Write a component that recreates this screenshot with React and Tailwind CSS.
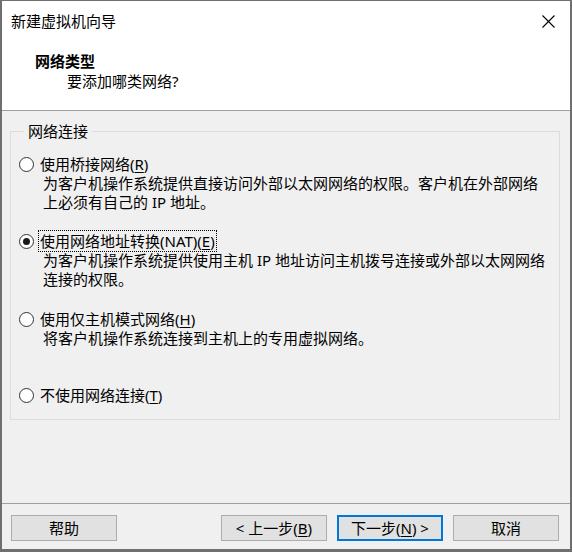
import React from "react";

const FONT = { fontFamily: '"Noto Sans", "Noto Sans CJK SC", sans-serif' };

function Radio({ checked, label, focus, desc }) {
  return (
    <div>
      <div className="flex items-center h-[20px]">
        <span className="w-[15px] h-[15px] min-w-[15px] rounded-full border border-[#333333] bg-white flex items-center justify-center shrink-0 box-border">
          {checked && <span className="w-[7px] h-[7px] rounded-full bg-[#1a1a1a]" />}
        </span>
        <span
          className={
            "ml-[4px] px-[1px] h-[22px] flex items-center border " +
            (focus ? "border-dotted border-black" : "border-transparent")
          }
        >
          {label}
        </span>
      </div>
      {desc && (
        <div className="pl-[24px] leading-[19px] pr-[12px]">
          {desc.map((d, i) => (
            <div key={i}>{d}</div>
          ))}
        </div>
      )}
    </div>
  );
}

function Btn({ children, primary }) {
  return (
    <button
      className={
        "w-[106px] h-[26px] bg-[#e1e1e1] text-[15px] text-black flex items-center justify-center leading-none " +
        (primary ? "border-2 border-[#0078d7]" : "border border-[#adadad]")
      }
      style={FONT}
    >
      {children}
    </button>
  );
}

const U = ({ children }) => <span className="underline underline-offset-2">{children}</span>;

export default function App() {
  return (
    <div
      className="w-[572px] h-[552px] bg-[#f0f0f0] border-t border-l-2 border-r-2 border-b-[3px] border-[#6f6f6f] flex flex-col text-[15px] text-black overflow-hidden"
      style={FONT}
    >
      {/* header */}
      <div className="bg-white h-[110px] border-b border-[#a0a0a0] shrink-0">
        <div className="flex items-center justify-between pl-[9px] pr-[15px] pt-[10px] h-[30px] leading-[20px]">
          <span>新建虚拟机向导</span>
          <svg width="13" height="13" viewBox="0 0 13 13" className="mt-[1px]">
            <path d="M0.5 0.5 L12.5 12.5 M12.5 0.5 L0.5 12.5" stroke="#000" strokeWidth="1.1" fill="none" />
          </svg>
        </div>
        <div className="mt-[20px] pl-[33px] leading-[20px] font-bold">网络类型</div>
        <div className="pl-[65px] leading-[20px]">要添加哪类网络?</div>
      </div>

      {/* body */}
      <fieldset className="mt-[10px] ml-[8px] w-[550px] border border-[#dcdcdc] pl-[8px] pt-[13px] pb-[14px]">
        <legend className="ml-[5px] px-[4px] leading-[20px]">网络连接</legend>
        <Radio
          label={<>使用桥接网络(<U>R</U>)</>}
          desc={[
            "为客户机操作系统提供直接访问外部以太网网络的权限。客户机在外部网络",
            "上必须有自己的 IP 地址。",
          ]}
        />
        <div className="mt-[19px]">
          <Radio
            checked
            focus
            label={<>使用网络地址转换(NAT)(<U>E</U>)</>}
            desc={[
              "为客户机操作系统提供使用主机 IP 地址访问主机拨号连接或外部以太网网络",
              "连接的权限。",
            ]}
          />
        </div>
        <div className="mt-[20px]">
          <Radio
            label={<>使用仅主机模式网络(<U>H</U>)</>}
            desc={["将客户机操作系统连接到主机上的专用虚拟网络。"]}
          />
        </div>
        <div className="mt-[37px]">
          <Radio label={<>不使用网络连接(<U>T</U>)</>} />
        </div>
      </fieldset>

      {/* footer */}
      <div className="mt-auto border-t border-[#a0a0a0] pt-[11px] pb-[8px] pl-[9px] pr-[11px] flex items-center shrink-0">
        <Btn>帮助</Btn>
        <div className="ml-auto flex gap-[10px] items-center">
          <Btn>&lt; 上一步(<U>B</U>)</Btn>
          <Btn primary>下一步(<U>N</U>) &gt;</Btn>
          <Btn>取消</Btn>
        </div>
      </div>
    </div>
  );
}
